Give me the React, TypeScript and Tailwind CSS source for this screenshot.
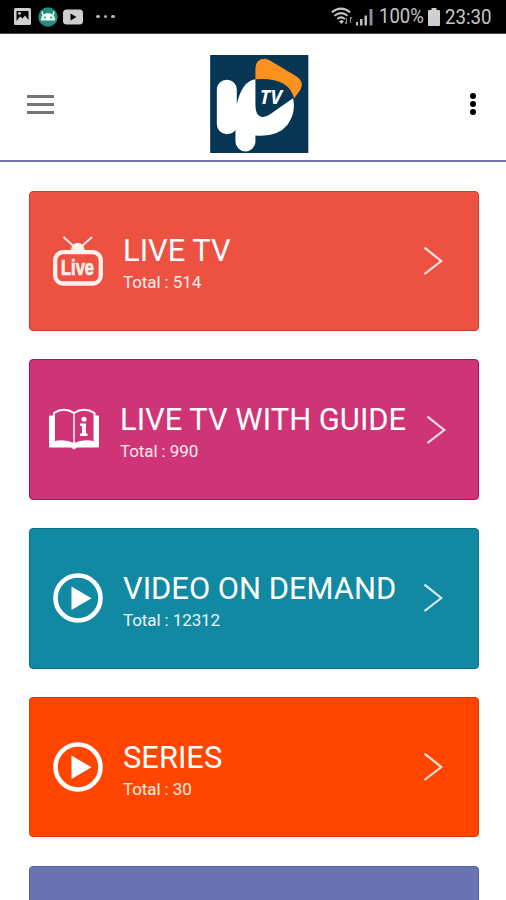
import type { ReactNode } from 'react'
import clsx from 'clsx'

type Item = {
    title: string
    total: number
    color: string
    icon: ReactNode
    wide?: boolean
}

const LiveIcon = () => (
    <svg className="size-[50px] shrink-0" viewBox="0 0 50 50" fill="none">
        <path d="M10.5 1 21 10.5M39 1 28.5 10.5" stroke="#ffe9e4" strokeWidth="1.9" />
        <path d="M18 14.5C18 9.500 21 7 24.800 7S31.500 9.500 31.500 14.500Z" fill="#fff0ec" />
        <rect x="2.200" y="16.200" width="45.600" height="31.300" rx="8" stroke="#fff0ec" strokeWidth="4.300" />
        <text x="8" y="38.800" textLength="33" lengthAdjust="spacingAndGlyphs" fontSize="21.500" fontWeight="700" fontFamily="'Liberation Sans', sans-serif" fill="#fff0ec" stroke="#fff0ec" strokeWidth="0.700">Live</text>
    </svg>
)

const GuideIcon = () => (
    <svg className="size-[50px] shrink-0" viewBox="0 0 50 50" fill="none">
        <path d="M0 11.500Q0 10.500 1 10.500H4.500V36.500Q15 33.500 25 38Q35 33.500 45.500 36.500V10.500H49Q50 10.500 50 11.500V41.500Q50 42.500 49 42.500H28L25 44.500 22 42.500H1Q0 42.500 0 41.500Z" fill="#fff" />
        <path d="M5 36V8Q15 1.500 25 8Q35 1.500 45.500 8V36" stroke="#fff" strokeWidth="1.900" />
        <path d="M25 8V38" stroke="#fbd3e6" strokeWidth="1.900" />
        <circle cx="35" cy="14.200" r="2.500" fill="#fff" />
        <path d="M31 18.500H37V28.500H38.500V31H31V28.500H33V21H31Z" fill="#fff" />
    </svg>
)

const PlayIcon = () => (
    <svg className="size-[50px] shrink-0" viewBox="0 0 50 50" fill="none">
        <circle cx="25" cy="25" r="22.500" stroke="#fff" strokeWidth="4.600" />
        <path d="M18.500 13.500V37L38.500 25.300Z" fill="#fff" />
    </svg>
)

const Chevron = () => (
    <svg className="h-[30px] w-[20px] shrink-0" viewBox="0 0 20 30" fill="none">
        <path d="M1.500 1.700 18.300 15 1.500 28" stroke="#fff" strokeOpacity="0.850" strokeWidth="2.200" />
    </svg>
)

const Logo = () => (
    <svg className="size-[98.500px]" viewBox="32 30 295 296">
        <rect x="32" y="30" width="295" height="296" fill="#073554" />
        <path d="M52 134A30 30 0 0 1 112 134V178Q128 108 168 103V182Q168 214 188 216Q200 217 212 208L281 160Q291 203 264 240Q234 277 168 272V290A30 30 0 0 1 108 290V255Q100 268 82 268A30 30 0 0 1 52 238Z" fill="#fff" />
        <path d="M168 103V70Q169 40 198 41Q205 42 213 47L291 94Q314 109 305 131Q302 138 284 161Q269 96 168 103Z" fill="#fb911f" />
        <text x="181" y="176" textLength="66" lengthAdjust="spacingAndGlyphs" fontSize="57" fontStyle="italic" fontWeight="700" fontFamily="'Open Sans', sans-serif" fill="#fff">TV</text>
    </svg>
)

const StatusBar = () => (
    <div className="flex h-[34px] items-center border-b border-[#4a4648] bg-black pl-[14px] pr-[14px] text-[#c6c6c6]">
        <svg className="h-[17px] w-[17px]" viewBox="0 0 17 17">
            <rect width="17" height="17" rx="1.500" fill="#cfcfcf" />
            <path d="M2.500 3H14.500V12L11 7.500 8.500 10.500 6 8.500 2.500 13Z" fill="#080808" />
            <circle cx="5.500" cy="5.300" r="1.400" fill="#cfcfcf" />
        </svg>
        <svg className="ml-[7px] size-[20px]" viewBox="0 0 20 20">
            <circle cx="10" cy="10" r="9.700" fill="#248e83" />
            <path d="M5 8 4 4.500M15 8 16 4.500" stroke="#edf8f7" strokeWidth="1.400" fill="none" />
            <path d="M2.800 13.500C2.800 8.500 6 6.300 10 6.300S17.200 8.500 17.200 13.500Z" fill="#edf8f7" />
            <circle cx="7" cy="10.500" r="0.900" fill="#248e83" />
            <circle cx="13" cy="10.500" r="0.900" fill="#248e83" />
        </svg>
        <svg className="ml-[5px] h-[16px] w-[20px]" viewBox="0 0 20 16">
            <rect y="0.500" width="20" height="15" rx="3.500" fill="#cfcfcf" />
            <path d="M7.500 4.500V11.500L13.500 8Z" fill="#080808" />
        </svg>
        <div className="ml-[13px] flex gap-[4px]">
            <span className="size-[3.500px] rounded-full bg-[#b5b5b5]" />
            <span className="size-[3.500px] rounded-full bg-[#b5b5b5]" />
            <span className="size-[3.500px] rounded-full bg-[#b5b5b5]" />
        </div>
        <svg className="ml-auto h-[19px] w-[22px]" viewBox="0 0 22 19" fill="none" stroke="#c6c6c6">
            <path d="M0.800 5.300Q10 -2 19.200 5.300M3.500 8.800Q10 3.500 16.500 8.800M6.300 12Q10 8.800 14 12" strokeWidth="2" />
            <path d="M8 14.300 10.500 13 13 14.300 10.500 17Z" fill="#c6c6c6" stroke="none" />
            <path d="M15.500 11V17M14 15.500 15.500 17M19.500 16V10M21 11.500 19.500 10" stroke="#8c8c8c" strokeWidth="1.100" />
        </svg>
        <svg className="ml-[2px] h-[18px] w-[19px]" viewBox="0 0 19 18" fill="#bdbdbd">
            <path d="M1 14H3V17.500H1ZM5 11H7.500V17.500H5ZM9.500 7.500H12V17.500H9.500Z" />
            <path d="M14.500 1H17.500V17.500H14.500Z" fill="#8c8c8c" />
        </svg>
        <span className="ml-[5px] w-[44px] origin-left scale-x-[0.880] whitespace-nowrap text-[21px] leading-none">100%</span>
        <svg className="ml-[5px] h-[18px] w-[12px]" viewBox="0 0 12 18">
            <path d="M3.500 0H8.500V2H11Q12 2 12 3V17Q12 18 11 18H1Q0 18 0 17V3Q0 2 1 2H3.500Z" fill="#cfcfcf" />
        </svg>
        <span className="ml-[5px] w-[47px] origin-left scale-x-[0.890] whitespace-nowrap pt-px text-[21px] leading-none">23:30</span>
    </div>
)

const items: Item[] = [
    { title: 'LIVE TV', total: 514, color: 'bg-[#ec5142] border-[#cf3d2e]', icon: <LiveIcon /> },
    { title: 'LIVE TV WITH GUIDE', total: 990, color: 'bg-[#cf3476] border-[#ad1259]', icon: <GuideIcon />, wide: true },
    { title: 'VIDEO ON DEMAND', total: 12312, color: 'bg-[#1189a2] border-[#087188]', icon: <PlayIcon /> },
    { title: 'SERIES', total: 30, color: 'bg-[#ff4500] border-[#dc3a04]', icon: <PlayIcon /> },
]

const MenuCard = ({ title, total, color, icon, wide }: Item) => (
    <div className={clsx('flex h-[140.500px] shrink-0 items-center rounded-[4px] border text-white', color, wide ? 'pl-[19.500px] pr-[32px]' : 'pl-[23px] pr-[35px]')}>
        {icon}
        <div className={clsx('flex-1 whitespace-nowrap pt-[5px]', wide ? 'ml-[21px]' : 'ml-[20.500px]')}>
            <h2 className="text-[30.900px] leading-[36px]">{title}</h2>
            <p className="mt-[2px] text-[17px] leading-[22px] tracking-[-0.1px] text-white/90">Total : {total}</p>
        </div>
        <Chevron />
    </div>
)

export default function App() {
    return (
        <div className="h-[900px] w-[506px] overflow-hidden bg-white font-['Roboto',sans-serif]">
            <StatusBar />
            <header className="flex h-[128px] items-center justify-between border-b-2 border-[#7472ad] pl-[26.500px] pr-[30px] pt-[14px]">
                <button className="flex w-[27px] flex-col gap-[5px]" aria-label="Menu">
                    <span className="h-[3px] w-full bg-[#757575]" />
                    <span className="h-[3px] w-full bg-[#757575]" />
                    <span className="h-[3px] w-full bg-[#757575]" />
                </button>
                <div className="-ml-[5px]">
                    <Logo />
                </div>
                <button className="flex flex-col gap-[2.300px]" aria-label="More">
                    <span className="size-[6px] rounded-full bg-black" />
                    <span className="size-[6px] rounded-full bg-black" />
                    <span className="size-[6px] rounded-full bg-black" />
                </button>
            </header>
            <main className="flex flex-col gap-[28.250px] pl-[28.500px] pr-[27.500px] pt-[28.500px]">
                {items.map((item) => (
                    <MenuCard key={item.title} {...item} />
                ))}
                <div className="h-[140.500px] shrink-0 rounded-[4px] border border-[#56609f] bg-[#6a74b2]" />
            </main>
        </div>
    )
}
